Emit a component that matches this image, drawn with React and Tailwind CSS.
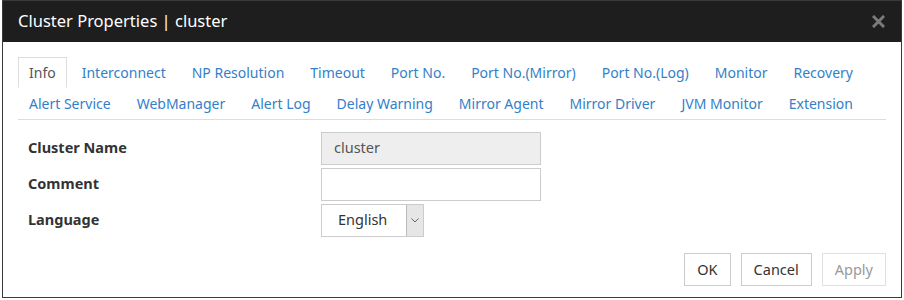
const rowOne = ["Info", "Interconnect", "NP Resolution", "Timeout", "Port No.", "Port No.(Mirror)", "Port No.(Log)", "Monitor", "Recovery"];
const rowTwo = ["Alert Service", "WebManager", "Alert Log", "Delay Warning", "Mirror Agent", "Mirror Driver", "JVM Monitor", "Extension"];

const Tab = ({ label, active }) => (
  <div
    className={`h-[31px] px-[10px] flex items-center shrink-0 whitespace-nowrap mr-[4px] border text-[14px] ${
      active ? "border-[#dddddd] border-b-white bg-white text-[#555555]" : "border-transparent text-[#3380c8]"
    }`}
  >
    {label}
  </div>
);

const Field = ({ label, children }) => (
  <div className="flex items-center h-[36px]">
    <div className="w-[303px] pl-[10px] font-bold text-[#333333] -mt-[1px]">{label}</div>
    {children}
  </div>
);

export default function App() {
  return (
    <div className="w-[904px] h-[300px] bg-white pl-[2px] font-['Noto_Sans',sans-serif] text-[14.5px]">
      <div className="w-[900px] h-[298px] border border-[#3a3a3a] flex flex-col">
        <div className="h-[41px] bg-[#1e1e1e] flex items-center justify-between pl-[15px] pr-[16px]">
          <span className="text-white text-[16.5px]">Cluster Properties | cluster</span>
          <svg width="13" height="13" viewBox="0 0 13 13">
            <path d="M2 2 L11 11 M11 2 L2 11" stroke="#7a7a7a" strokeWidth="3" strokeLinecap="square" />
          </svg>
        </div>

        <div className="px-[15px] pt-[15px] flex flex-col flex-1">
          <div className="border-b border-[#dddddd]">
            <div className="flex">
              {rowOne.map((t) => (
                <Tab key={t} label={t} active={t === "Info"} />
              ))}
            </div>
            <div className="flex">
              {rowTwo.map((t) => (
                <Tab key={t} label={t} />
              ))}
            </div>
          </div>

          <div className="mt-[10px]">
            <Field label="Cluster Name">
              <div className="w-[220px] h-[33px] border border-[#cccccc] bg-[#eeeeee] flex items-center pl-[12px] text-[#555555]">
                cluster
              </div>
            </Field>
            <Field label="Comment">
              <div className="w-[220px] h-[33px] border border-[#cccccc] bg-white" />
            </Field>
            <Field label="Language">
              <div className="w-[103px] h-[33px] border border-[#cccccc] bg-white flex">
                <div className="flex-1 flex items-center pl-[16px] text-[#333333]">English</div>
                <div className="w-[17px] bg-[#e6e6e6] border-l border-[#bbbbbb] flex items-center justify-center">
                  <svg width="8" height="5" viewBox="0 0 8 5">
                    <path d="M0.5 0.5 L4 4 L7.5 0.5" fill="none" stroke="#666666" strokeWidth="1" />
                  </svg>
                </div>
              </div>
            </Field>
          </div>

          <div className="mt-auto mb-[11px] flex justify-end gap-[10px]">
            <button className="h-[33px] px-[12px] border border-[#cccccc] bg-white text-[#333333]">OK</button>
            <button className="h-[33px] px-[12px] border border-[#cccccc] bg-white text-[#333333]">Cancel</button>
            <button className="h-[33px] px-[12px] border border-[#e0e0e0] bg-white text-[#999999]">Apply</button>
          </div>
        </div>
      </div>
    </div>
  );
}
